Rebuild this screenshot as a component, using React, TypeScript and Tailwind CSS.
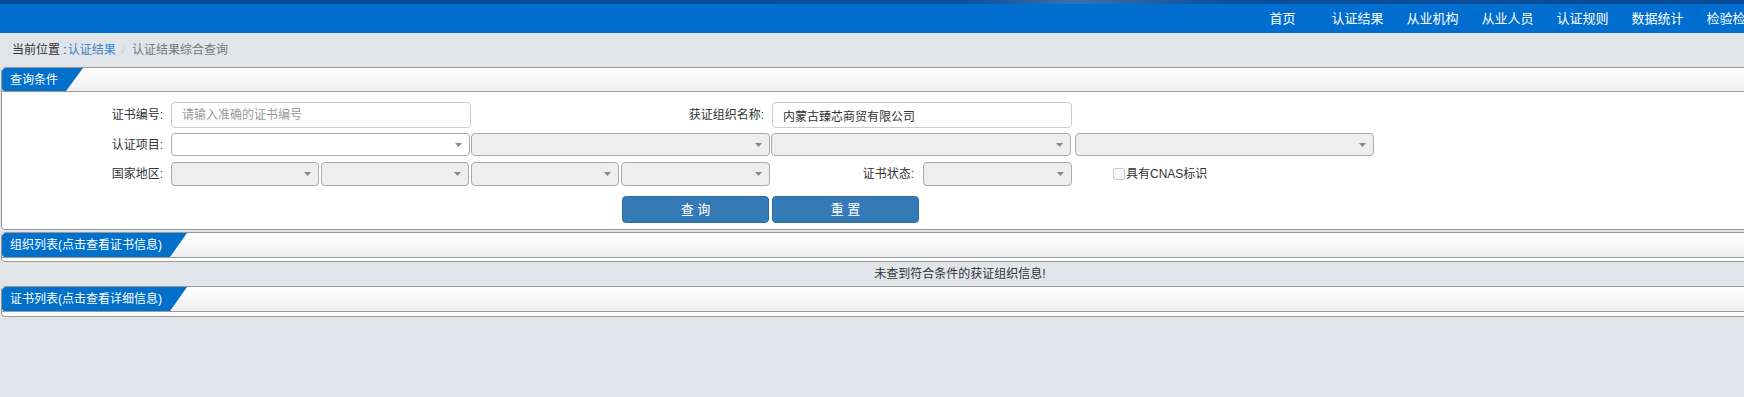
import React from "react";

const navItems = ["首页", "认证结果", "从业机构", "从业人员", "认证规则", "数据统计", "检验检测", "信息公告", "帮助中心"];

function Arrow() {
  return (
    <svg width="7" height="4" viewBox="0 0 7 4" className="shrink-0">
      <path d="M0 0 L7 0 L3.5 4 Z" fill="#888" />
    </svg>
  );
}

function Select({ w, disabled = true }: { w: string; disabled?: boolean }) {
  return (
    <div
      className={`${w} h-full shrink-0 flex items-center justify-end pr-[7px] border border-[#aaa] rounded-[4px] ${
        disabled ? "bg-[#eee]" : "bg-white"
      }`}
    >
      <Arrow />
    </div>
  );
}

function PanelHeader({ title, h }: { title: string; h: string }) {
  return (
    <div className={`${h} flex border-b border-[#999] bg-[linear-gradient(180deg,#ffffff_0%,#f9f9f9_40%,#efefef_100%)]`}>
      <div className="h-full flex items-center pl-[8px] pr-[25px] bg-[#0070cb] text-white text-[12px] rounded-tl-[4px] rounded-bl-[3px] [clip-path:polygon(0_0,100%_0,calc(100%-17px)_100%,0_100%)]">
        {title}
      </div>
    </div>
  );
}

export default function App() {
  return (
    <div className="w-full min-h-screen overflow-hidden bg-[#e1e5ea] font-['Liberation_Sans','Noto_Sans_CJK_SC',sans-serif] text-[12px] text-[#333]">
      <div className="w-[1920px]">
        {/* top band */}
        <div className="h-[4px] bg-[linear-gradient(90deg,#0a4b97_0%,#0b4e9b_50%,#3572b3_56%,#0b4e9b_64%,#0a4b97_100%)]" />
        {/* nav */}
        <div className="h-[29px] bg-[#006ecf] flex justify-end">
          {navItems.map((n) => (
            <div key={n} className="w-[75px] flex items-center justify-center text-white text-[13px] leading-none">
              {n}
            </div>
          ))}
        </div>
        {/* breadcrumb */}
        <div className="h-[34px] flex items-center pl-[12px] text-[12px]">
          <span className="text-[#333]">当前位置 : </span>
          <span className="text-[#3a87c8] ml-[1px]">认证结果</span>
          <span className="text-[#ccc] px-[6px]">/</span>
          <span className="text-[#777] ml-[1px]">认证结果综合查询</span>
        </div>

        {/* panel 1 */}
        <div className="ml-px w-[1916px] border border-[#999] rounded-[4px] bg-white">
          <PanelHeader title="查询条件" h="h-[24px]" />
          <div className="pt-[10px] pb-[6px]">
            {/* row 1 */}
            <div className="flex items-center h-[26px]">
              <div className="w-[169px] text-right pr-[8px]">证书编号:</div>
              <input
                className="w-[300px] h-full border border-[#ccc] rounded-[4px] px-[10px] text-[12px] text-[#333] placeholder:text-[#999] outline-none"
                placeholder="请输入准确的证书编号"
              />
              <div className="w-[301px] text-right pr-[8px]">获证组织名称:</div>
              <input
                className="w-[300px] h-full border border-[#ccc] rounded-[4px] px-[10px] text-[12px] text-[#333] outline-none"
                defaultValue="内蒙古臻芯商贸有限公司"
              />
            </div>
            {/* row 2 */}
            <div className="flex items-center h-[23px] mt-[5px]">
              <div className="w-[169px] text-right pr-[8px]">认证项目:</div>
              <div className="flex h-full gap-px">
                <Select w="w-[299px]" disabled={false} />
                <Select w="w-[299px]" />
                <Select w="w-[300px]" />
                <div className="w-[2px]" />
                <Select w="w-[299px]" />
              </div>
            </div>
            {/* row 3 */}
            <div className="flex items-center h-[24px] mt-[6px]">
              <div className="w-[169px] text-right pr-[8px]">国家地区:</div>
              <div className="flex h-full gap-[2px]">
                <Select w="w-[148px]" />
                <Select w="w-[148px]" />
                <Select w="w-[148px]" />
                <Select w="w-[149px]" />
              </div>
              <div className="w-[153px] text-right pr-[9px]">证书状态:</div>
              <Select w="w-[149px]" />
              <div className="flex items-center pl-[41px]">
                <span className="w-[12px] h-[12px] border border-[#ccc] rounded-[2px] bg-[#f8f8f8]" />
                <span className="ml-[1px]">具有CNAS标识</span>
              </div>
            </div>
            {/* buttons */}
            <div className="flex h-[27px] mt-[10px] pl-[620px] gap-[3px]">
              <button className="w-[147px] h-full bg-[#337ab7] border border-[#2e6da4] rounded-[4px] text-white text-[13px]">
                查 询
              </button>
              <button className="w-[147px] h-full bg-[#337ab7] border border-[#2e6da4] rounded-[4px] text-white text-[13px]">
                重 置
              </button>
            </div>
          </div>
        </div>

        {/* panel 2 */}
        <div className="ml-px mt-[2px] w-[1916px] border border-[#999] rounded-[4px] bg-white">
          <PanelHeader title="组织列表(点击查看证书信息)" h="h-[25px]" />
          <div className="h-[3px]" />
        </div>
        <div className="h-[24px] flex items-center justify-center text-[#333]">未查到符合条件的获证组织信息!</div>

        {/* panel 3 */}
        <div className="ml-px w-[1916px] border border-[#999] rounded-[4px] bg-white">
          <PanelHeader title="证书列表(点击查看详细信息)" h="h-[25px]" />
          <div className="h-[4px]" />
        </div>
      </div>
    </div>
  );
}
